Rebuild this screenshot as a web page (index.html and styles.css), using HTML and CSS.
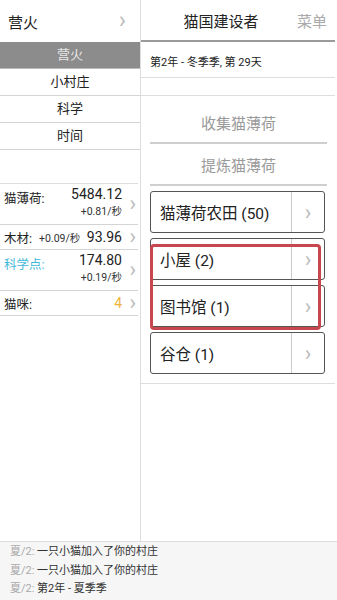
FILE: index.html
```html
<!DOCTYPE html>
<html lang="zh">
<head>
  <meta charset="UTF-8">
  <meta name="viewport" content="width=device-width, initial-scale=1.0">
  <title>猫国建设者</title>
  <link rel="stylesheet" href="styles.css">
</head>
<body>
  <div class="app">
    <div class="main">
      <aside class="left">
        <div class="left-head">
          <span>营火</span>
          <span class="chev">&#x203A;</span>
        </div>
        <ul class="tabs">
          <li class="tab active">营火</li>
          <li class="tab">小村庄</li>
          <li class="tab">科学</li>
          <li class="tab">时间</li>
        </ul>
        <ul class="res">
          <li class="res-row tall">
            <span class="res-name">猫薄荷:</span>
            <span class="res-vals">
              <span class="res-num">5484.12</span>
              <span class="res-rate">+0.81/秒</span>
            </span>
            <span class="chev">&#x203A;</span>
          </li>
          <li class="res-row">
            <span class="res-name short">木材:</span>
            <span class="res-rate inline">+0.09/秒</span>
            <span class="res-num fill">93.96</span>
            <span class="chev">&#x203A;</span>
          </li>
          <li class="res-row tall">
            <span class="res-name sci">科学点:</span>
            <span class="res-vals">
              <span class="res-num">174.80</span>
              <span class="res-rate">+0.19/秒</span>
            </span>
            <span class="chev">&#x203A;</span>
          </li>
          <li class="res-row">
            <span class="res-name short">猫咪:</span>
            <span class="res-num fill cats">4</span>
            <span class="chev">&#x203A;</span>
          </li>
        </ul>
      </aside>

      <section class="right">
        <div class="right-head">
          <span class="title">猫国建设者</span>
          <span class="menu">菜单</span>
        </div>
        <div class="date">第2年 - 冬季季, 第 29天</div>
        <div class="spacer"></div>
        <div class="actions">
          <div class="action">收集猫薄荷</div>
          <div class="action">提炼猫薄荷</div>
        </div>
        <div class="buildings">
          <div class="bld"><span class="bld-name">猫薄荷农田 (50)</span><span class="bld-more">&#x203A;</span></div>
          <div class="bld"><span class="bld-name">小屋 (2)</span><span class="bld-more">&#x203A;</span></div>
          <div class="bld"><span class="bld-name">图书馆 (1)</span><span class="bld-more">&#x203A;</span></div>
          <div class="bld"><span class="bld-name">谷仓 (1)</span><span class="bld-more">&#x203A;</span></div>
          <div class="mark"></div>
        </div>
      </section>
    </div>

    <footer class="log">
      <p><span class="stamp">夏/2:</span> 一只小猫加入了你的村庄</p>
      <p><span class="stamp">夏/2:</span> 一只小猫加入了你的村庄</p>
      <p><span class="stamp">夏/2:</span> 第2年 - 夏季季</p>
    </footer>
  </div>
</body>
</html>
```

FILE: styles.css
```css
body {
  margin: 0;
  font-family: Roboto, "Noto Sans CJK SC", sans-serif;
  color: #333;
  background: #fff;
}

ul {
  list-style: none;
  margin: 0;
  padding: 0;
}

.app {
  width: 337px;
  height: 600px;
  display: flex;
  flex-direction: column;
  overflow: hidden;
}

.main {
  height: 541px;
  display: flex;
}

.chev {
  color: #bbb;
  font-size: 22px;
  line-height: 1;
}

/* left column */

.left {
  width: 140px;
  border-right: 1px solid #ddd;
  box-sizing: content-box;
}

.left-head {
  height: 42px;
  display: flex;
  align-items: center;
  justify-content: space-between;
  padding: 0 14px 0 8px;
  font-size: 15px;
  color: #222;
}

.left-head .chev {
  font-size: 24px;
  margin-top: -3px;
}

.tab {
  height: 26px;
  line-height: 26px;
  text-align: center;
  font-size: 13px;
  color: #222;
  border-bottom: 1px solid #d4d4d4;
}

.tab.active {
  background: #8c8c8c;
  color: #e8e8e8;
  border-bottom: 1px solid #bbb;
}

.res {
  margin-top: 33px;
  border-top: 1px solid #ddd;
  margin-right: 2px;
}

.res-row {
  display: flex;
  align-items: center;
  height: 24px;
  padding: 0 2px 0 4px;
  font-size: 12.5px;
  color: #222;
  border-bottom: 1px solid #d4d4d4;
}

.res-row.tall {
  height: 40px;
  align-items: flex-start;
}

.res-row.tall .res-name {
  margin-top: 4px;
}

.res-row.tall .chev {
  align-self: center;
}

.res-name {
  flex: 1;
}

.res-name.short {
  flex: 0 0 auto;
}

.res-name.sci {
  color: #3fb8d8;
}

.res-vals {
  display: flex;
  flex-direction: column;
  align-items: flex-end;
  margin-top: 2px;
}

.res-num {
  font-size: 14px;
  color: #222;
}

.res-num.fill {
  flex: 1;
  text-align: right;
}

.res-num.cats {
  color: #f0b43c;
}

.res-rate {
  font-size: 10.5px;
  color: #333;
  margin-top: 1px;
}

.res-rate.inline {
  margin: 0 0 0 7px;
}

.res-row .chev {
  width: 12px;
  text-align: right;
  margin-left: 2px;
}

/* right column */

.right {
  flex: 1;
  display: flex;
  flex-direction: column;
}

.right-head {
  height: 40px;
  display: flex;
  align-items: center;
  border-bottom: 2px solid #9a9a9a;
  margin-right: 2px;
}

.title {
  flex: 1;
  text-align: center;
  font-size: 15px;
  color: #222;
  padding-left: 4px;
}

.menu {
  font-size: 15px;
  color: #aaa;
  margin-right: 8px;
}

.date {
  height: 35px;
  line-height: 42px;
  padding-left: 9px;
  font-size: 11px;
  color: #222;
  border-bottom: 1px solid #ddd;
  margin-right: 2px;
}

.spacer {
  height: 17px;
  border-bottom: 1px solid #ddd;
  margin-right: 2px;
}

.actions {
  padding: 6px 10px 0 9px;
}

.action {
  height: 40px;
  line-height: 44px;
  text-align: center;
  font-size: 15px;
  color: #9a9a9a;
  border-bottom: 2px solid #cfcfcf;
}

.buildings {
  position: relative;
  display: flex;
  flex-direction: column;
  gap: 5px;
  padding: 5px 10px 9px 9px;
  border-bottom: 1px solid #ddd;
  margin-right: 2px;
}

.bld {
  height: 40px;
  display: flex;
  border: 1px solid #555;
  border-radius: 3px;
}

.bld-name {
  flex: 1;
  display: flex;
  align-items: center;
  padding-left: 9px;
  font-size: 15.5px;
  color: #222;
}

.bld-more {
  width: 32px;
  border-left: 1px solid #ccc;
  display: flex;
  align-items: center;
  justify-content: center;
  color: #bbb;
  font-size: 22px;
}

.mark {
  position: absolute;
  left: 9px;
  top: 58px;
  width: 165px;
  height: 80px;
  border: 3px solid #c8464e;
  border-radius: 4px;
}

/* log */

.log {
  flex: 1;
  background: #f6f6f7;
  border-top: 1px solid #ddd;
  padding: 1px 0 0 10px;
}

.log p {
  margin: 0;
  height: 18.5px;
  line-height: 18.5px;
  font-size: 11px;
  color: #333;
}

.stamp {
  color: #aaa;
}
```
